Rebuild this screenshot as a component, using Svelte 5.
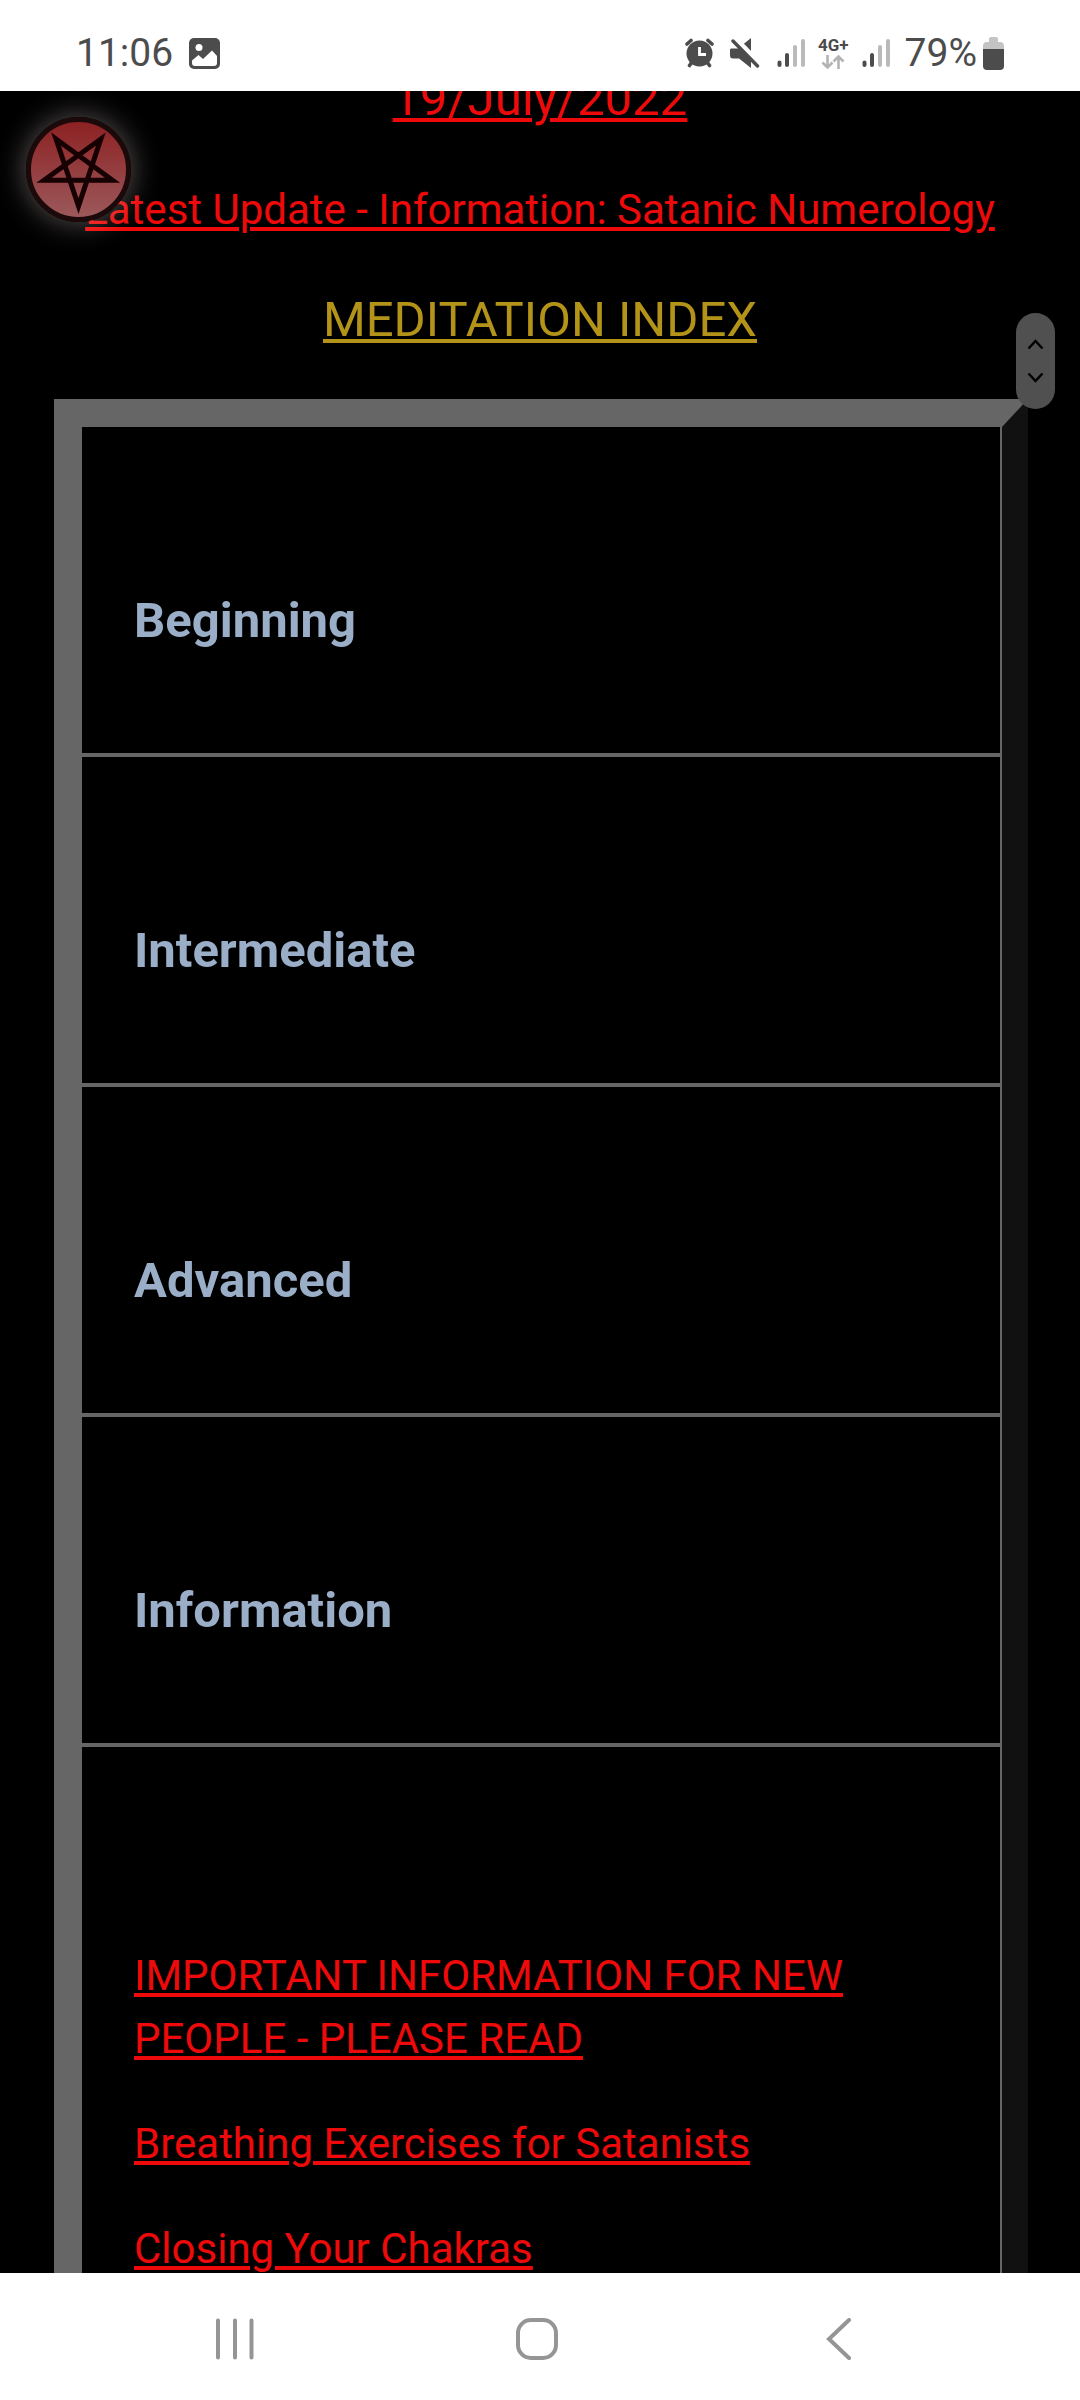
<script>
  const sections = ['Beginning', 'Intermediate', 'Advanced', 'Information'];
  const articles = [
    'IMPORTANT INFORMATION FOR NEW PEOPLE - PLEASE READ',
    'Breathing Exercises for Satanists',
    'Closing Your Chakras'
  ];
</script>

{#snippet signal()}
  <svg width="30" height="30" viewBox="0 0 30 30" stroke-width="4" stroke-linecap="round" aria-hidden="true">
    <path d="M3.500 24.500V27M11 17V27" stroke="#4c4c4c" />
    <path d="M19 9V27M27 3V27" stroke="#bababa" />
  </svg>
{/snippet}

<div class="screen">
  <header class="status">
    <div class="left">
      <span class="clock">11:06</span>
      <svg width="31" height="31" viewBox="0 0 31 31" aria-hidden="true">
        <rect width="31" height="31" rx="5" fill="#4c4c4c" />
        <circle cx="10" cy="9.500" r="3.500" fill="#fff" />
        <path d="M3 22.500L9.500 17L14 21L23 12.500L28 18V25Q28 28 25 28H6Q3 28 3 25Z" fill="#fff" />
      </svg>
    </div>
    <div class="right">
      <svg width="29" height="30" viewBox="0 0 29 30" aria-hidden="true">
        <circle cx="14.500" cy="15.500" r="13" fill="#4c4c4c" />
        <path d="M2 6L6 2.500M27 6L23 2.500M4.500 27.500L7 24M24.500 27.500L22 24" stroke="#4c4c4c" stroke-width="3.600" stroke-linecap="round" />
        <path d="M14.500 9V16.500H21" fill="none" stroke="#fff" stroke-width="2.800" />
      </svg>
      <svg width="30" height="30" viewBox="0 0 30 30" aria-hidden="true">
        <path d="M1 10.500H8L21 0V30L9 20.500H3Q0 20.500 0 17.500V12Q0 10.500 1 10.500Z" fill="#4c4c4c" />
        <path d="M5 0L31 27" stroke="#fff" stroke-width="5" />
        <path d="M0 0H6L4 10H0Z" fill="#fff" />
        <path d="M3 3L27.500 28" stroke="#4c4c4c" stroke-width="3.400" stroke-linecap="round" />
      </svg>
      <div class="network">
        {@render signal()}
        <div class="data">
          <span>4G+</span>
          <svg width="24" height="14" viewBox="0 0 24 14" fill="none" stroke="#b4b4b4" stroke-width="2.600" aria-hidden="true">
            <path d="M6.500 0V12.500M1.500 7.500L6.500 12.500L11.500 7.500M17.500 14V1.500M12.500 6.500L17.500 1.500L22.500 6.500" />
          </svg>
        </div>
        {@render signal()}
      </div>
      <div class="power">
        <span>79%</span>
        <svg width="21" height="33" viewBox="0 0 21 33" aria-hidden="true">
          <path d="M6 5V2Q6 0 8 0H13Q15 0 15 2V5H17Q21 5 21 9V14H0V9Q0 5 4 5Z" fill="#c4c4c4" />
          <path d="M0 12H21V29Q21 33 17 33H4Q0 33 0 29Z" fill="#4c4c4c" />
        </svg>
      </div>
    </div>
  </header>

  <main>
    <h2 class="date"><a href="#date">19/July/2022</a></h2>
    <p><a href="#latest">Latest Update - Information: Satanic Numerology</a></p>
    <h1><a href="#index">MEDITATION INDEX</a></h1>

    <div class="frame">
      {#each sections as title}
        <section><h2>{title}</h2></section>
      {/each}
      <ul>
        {#each articles as article, i}
          <li><a href={`#article-${i}`}>{article}</a></li>
        {/each}
      </ul>
    </div>

    <button class="badge" aria-label="Open menu">
      <svg width="105" height="105" viewBox="0 0 105 105" aria-hidden="true">
        <defs>
          <linearGradient id="disc" x1="0" y1="0" x2="0" y2="1">
            <stop offset="0" stop-color="#8c2022" />
            <stop offset="1" stop-color="#9c5a5c" />
          </linearGradient>
        </defs>
        <circle cx="52.500" cy="52.500" r="50" fill="url(#disc)" stroke="#1c0a0b" stroke-width="5" />
        <path d="M30 22L86.500 63.300H18L74.800 22L52.500 89Z" fill="none" stroke="#160002" stroke-width="5" stroke-miterlimit="10" />
      </svg>
    </button>

    <div class="jump">
      <button aria-label="Scroll up">
        <svg width="17" height="11" viewBox="0 0 17 11" aria-hidden="true"><path d="M1.500 9.500L8.500 2L15.500 9.500" /></svg>
      </button>
      <button aria-label="Scroll down">
        <svg width="17" height="11" viewBox="0 0 17 11" aria-hidden="true"><path d="M1.500 1.500L8.500 9L15.500 1.500" /></svg>
      </button>
    </div>
  </main>

  <nav>
    <button aria-label="Recent apps">
      <svg width="42" height="42" viewBox="0 0 42 42" aria-hidden="true"><path d="M4 2.500V39.500M21 2.500V39.500M37.500 2.500V39.500" /></svg>
    </button>
    <button aria-label="Home">
      <svg width="42" height="42" viewBox="0 0 42 42" aria-hidden="true"><rect x="2" y="2" width="38" height="38" rx="13" /></svg>
    </button>
    <button aria-label="Back">
      <svg width="42" height="42" viewBox="0 0 42 42" aria-hidden="true"><path d="M31 2L11 21L31 40" /></svg>
    </button>
  </nav>
</div>

<style>
  :global(body) {
    margin: 0;
    background: #000;
  }

  .screen {
    display: flex;
    flex-direction: column;
    height: 100vh;
    font-family: Roboto, 'Liberation Sans', sans-serif;
    font-size: 42px;
    line-height: 63px;
  }

  svg {
    display: block;
    flex: none;
  }

  button {
    margin: 0;
    padding: 0;
    border: 0;
    background: none;
  }

  .status {
    flex: none;
    display: flex;
    justify-content: space-between;
    align-items: center;
    padding: 15px 76px 0;
    background: #fff;
    color: #4c4c4c;
    font-size: 39px;
    line-height: 76px;
  }

  .left,
  .right,
  .network,
  .power {
    display: flex;
    align-items: center;
  }

  .left {
    gap: 16px;
  }

  .right {
    gap: 16px;
  }

  .network {
    gap: 12px;
    margin-right: -2px;
  }

  .power {
    gap: 6px;
  }

  .data {
    display: flex;
    flex-direction: column;
    align-items: center;
    gap: 2px;
    font-size: 17px;
    font-weight: 700;
    line-height: 16px;
  }

  main {
    position: relative;
    flex: 1;
    min-height: 0;
    overflow: hidden;
    background: #000;
    text-align: center;
  }

  a {
    color: #ee0a0a;
    text-decoration-line: underline;
    text-decoration-thickness: 4px;
    text-underline-offset: 3px;
  }

  h1,
  h2,
  p,
  ul {
    margin: 0;
    padding: 0;
  }

  h1,
  h2 {
    font-size: 49px;
    line-height: 72px;
  }

  h1,
  .date {
    font-weight: 400;
  }

  .date {
    margin-top: -28px;
  }

  p,
  h1 {
    margin-top: 43px;
  }

  h1 a {
    color: #b39318;
  }

  .frame {
    margin: 43px 52px 0 54px;
    border: 28px solid #666;
    border-right: 26px solid #111;
    text-align: left;
  }

  section,
  ul {
    border-right: 2px solid #666;
    padding-left: 52px;
    padding-right: 52px;
  }

  section {
    padding-top: 158px;
    padding-bottom: 96px;
    border-bottom: 4px solid #666;
    color: #9aaec8;
  }

  ul {
    padding-top: 197px;
    list-style: none;
  }

  li {
    margin-bottom: 42px;
  }

  .badge {
    position: absolute;
    top: 26px;
    left: 26px;
    border-radius: 50%;
    box-shadow: 0 0 28px 2px rgb(255 240 235 / 32%);
  }

  .jump {
    position: absolute;
    top: 222px;
    right: 25px;
    display: flex;
    flex-direction: column;
    align-items: center;
    justify-content: center;
    gap: 22px;
    width: 39px;
    height: 96px;
    border-radius: 20px;
    background: #505050;
  }

  .jump path {
    fill: none;
    stroke: #000;
    stroke-width: 2.5;
  }

  nav {
    flex: none;
    display: grid;
    grid-template-columns: repeat(3, 1fr);
    box-sizing: border-box;
    height: 127px;
    padding: 4px 90px 0 84px;
    background: #fff;
  }

  nav button {
    display: flex;
    align-items: center;
    justify-content: center;
  }

  nav path,
  nav rect {
    fill: none;
    stroke: #959595;
    stroke-width: 4;
    stroke-linecap: round;
  }
</style>
